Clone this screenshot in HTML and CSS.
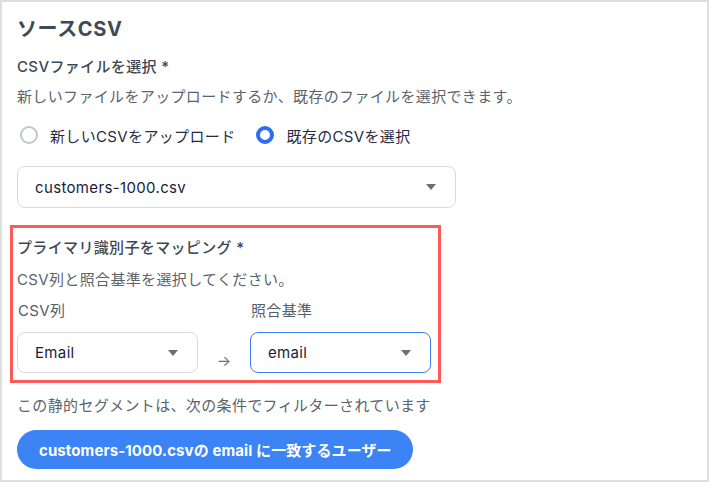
FILE: index.html
```html
<!DOCTYPE html>
<html lang="ja">
<head>
<meta charset="utf-8">
<link rel="stylesheet" href="styles.css">
</head>
<body>
<div class="panel">
  <h1 class="title">ソースCSV</h1>
  <div class="label">CSVファイルを選択 *</div>
  <div class="desc">新しいファイルをアップロードするか、既存のファイルを選択できます。</div>
  <div class="radios">
    <label class="radio"><span class="dot"></span><span class="rtext">新しいCSVをアップロード</span></label>
    <label class="radio"><span class="dot on"></span><span class="rtext">既存のCSVを選択</span></label>
  </div>
  <div class="select wide"><span class="val">customers-1000.csv</span><span class="caret"></span></div>
  <div class="mapbox">
    <div class="label">プライマリ識別子をマッピング *</div>
    <div class="desc small">CSV列と照合基準を選択してください。</div>
    <div class="cols">
      <div class="col">
        <div class="collabel">CSV列</div>
        <div class="select"><span class="val">Email</span><span class="caret"></span></div>
      </div>
      <div class="arrow">→</div>
      <div class="col">
        <div class="collabel">照合基準</div>
        <div class="select focus"><span class="val">email</span><span class="caret"></span></div>
      </div>
    </div>
  </div>
  <div class="desc seg">この静的セグメントは、次の条件でフィルターされています</div>
  <div class="pillrow"><span class="pill">customers-1000.csvの email に一致するユーザー</span></div>
</div>
</body>
</html>
```
FILE: styles.css
```css
* { box-sizing: border-box; }
html, body { margin: 0; padding: 0; }
body {
  width: 709px;
  height: 482px;
  font-family: "Inter", "Noto Sans CJK JP", sans-serif;
  letter-spacing: 0.35px;
  background: #dedede;
}
.panel {
  width: 709px;
  height: 482px;
  border: 2px solid #dedede;
  background: #fff;
  padding: 13px 15px 0 15px;
}
.title {
  margin: 0;
  font-size: 20px;
  line-height: 28px;
  font-weight: 700;
  letter-spacing: 0.6px;
  color: #3d4b57;
}
.label {
  margin-top: 14px;
  font-size: 15px;
  line-height: 20px;
  font-weight: 500;
  color: #3e4853;
}
.desc {
  margin-top: 10px;
  font-size: 15px;
  line-height: 20px;
  color: #5b636c;
}
.radios {
  margin-top: 16px;
  height: 24px;
  display: flex;
  align-items: center;
  gap: 21px;
  padding-left: 3px;
}
.radio {
  display: flex;
  align-items: center;
  gap: 12px;
}
.dot {
  width: 18px;
  height: 18px;
  border-radius: 50%;
  border: 2px solid #c3c5cf;
}
.dot.on {
  border: 4px solid #2c6df3;
}
.rtext {
  font-size: 15px;
  color: #272b42;
}
.select {
  height: 41px;
  border: 1px solid #d8dae0;
  border-radius: 8px;
  display: flex;
  align-items: center;
  justify-content: space-between;
  padding: 0 19px 0 17px;
  font-size: 15px;
  font-weight: 400;
  color: #181c3a;
}
.select.wide {
  margin-top: 19px;
  height: 42px;
  width: 439px;
}
.select.focus {
  border-color: #3b7ef5;
}
.caret {
  width: 0;
  height: 0;
  border-left: 5.5px solid transparent;
  border-right: 5.5px solid transparent;
  border-top: 6px solid #6b6e82;
}
.mapbox {
  margin-top: 17px;
  margin-left: -7px;
  width: 431px;
  border: 3px solid #ff5a5a;
  padding: 10px 0 7px 4px;
}
.mapbox .label { margin-top: 0; }
.desc.small { margin-top: 12px; }
.cols {
  margin-top: 11px;
  display: grid;
  grid-template-columns: 181px 52px 181px;
  align-items: end;
}
.collabel {
  font-size: 15px;
  line-height: 20px;
  color: #555d66;
  margin-bottom: 11px;
  padding-left: 1px;
}
.arrow {
  text-align: center;
  font-size: 15px;
  color: #6b7280;
  line-height: 16px;
  padding-bottom: 4px;
}
.desc.seg { margin-top: 13px; }
.pillrow {
  margin-top: 14px;
  display: flex;
}
.pill {
  height: 39px;
  padding: 0 21px 0 22px;
  border-radius: 20px;
  background: #3c83f5;
  color: #fff;
  font-size: 15px;
  font-weight: 700;
  letter-spacing: 0.1px;
  display: flex;
  align-items: center;
}
```
